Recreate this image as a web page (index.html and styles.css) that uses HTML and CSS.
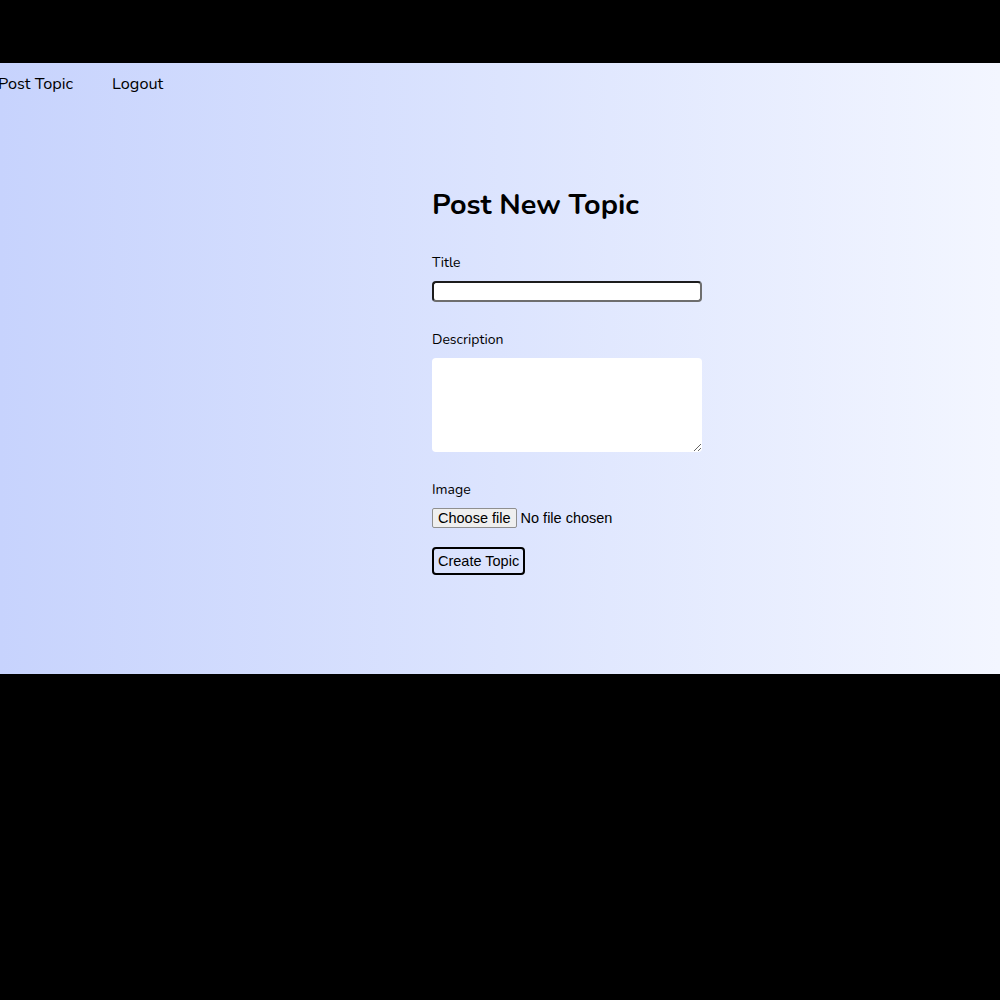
FILE: index.html
```html
<!DOCTYPE html>
<html lang="en">
<head>
<meta charset="utf-8">
<title>Post New Topic</title>
<link rel="stylesheet" href="styles.css">
</head>
<body>
<div class="screen">
  <main class="band">
    <nav class="nav">
      <a class="nav-link" href="#">Post Topic</a>
      <a class="nav-link" href="#">Logout</a>
    </nav>
    <section class="content">
      <form class="topic-form">
        <h1 class="title">Post New Topic</h1>
        <div class="field">
          <label class="label" for="t">Title</label>
          <input class="text-input" id="t" type="text">
        </div>
        <div class="field">
          <label class="label" for="d">Description</label>
          <textarea class="textarea" id="d"></textarea>
        </div>
        <div class="field field-file">
          <label class="label" for="i">Image</label>
          <div class="file-row">
            <span class="file-btn">Choose file</span>
            <span class="file-text">No file chosen</span>
          </div>
        </div>
        <button class="submit" type="button">Create Topic</button>
      </form>
    </section>
  </main>
</div>
</body>
</html>
```
FILE: styles.css
```css
html, body {
  margin: 0;
  padding: 0;
  background: #000;
}
body {
  font-family: "Nunito", "Lato", "Noto Sans", sans-serif;
  color: #000;
}
.screen {
  width: 1000px;
  height: 1000px;
  padding-top: 63px;
  box-sizing: border-box;
}
.band {
  height: 611px;
  background: linear-gradient(to right, #c7d3fd, #dce4fe 50%, #f3f6ff);
  display: flex;
  flex-direction: column;
}
.nav {
  display: flex;
  gap: 39px;
  margin-left: -2px;
  padding-top: 11px;
  height: 29px;
}
.nav-link {
  color: #000;
  text-decoration: none;
  font-size: 16.3px;
  line-height: 20px;
}
.content {
  padding-left: 432px;
  padding-top: 84px;
}
.topic-form {
  width: 270px;
  display: flex;
  flex-direction: column;
}
.title {
  margin: 0 0 31px;
  font-size: 28.75px;
  line-height: 36px;
  font-weight: 700;
}
.field {
  display: flex;
  flex-direction: column;
  margin-bottom: 29px;
}
.label {
  font-size: 14px;
  line-height: 18px;
  margin-bottom: 9px;
}
.text-input {
  box-sizing: border-box;
  width: 270px;
  height: 21px;
  margin: 0;
  border: 2px solid;
  border-color: #1c1c1c #6e6e6e #6e6e6e #1c1c1c;
  border-radius: 4px;
  background: #fff;
}
.textarea {
  box-sizing: border-box;
  width: 270px;
  height: 94px;
  margin: 0;
  border: none;
  border-radius: 4px;
  background: #fff;
}
.field-file {
  margin-bottom: 19px;
}
.file-row {
  display: flex;
  align-items: center;
  font-family: "Liberation Sans", Arial, sans-serif;
  font-size: 14.5px;
}
.file-btn {
  box-sizing: border-box;
  height: 20px;
  line-height: 18px;
  padding: 0 5px;
  border: 1px solid #8f8f8f;
  border-radius: 2px;
  background: #efefef;
  color: #000;
}
.file-text {
  margin-left: 4px;
}
.submit {
  align-self: flex-start;
  box-sizing: border-box;
  height: 28px;
  padding: 0 4px;
  border: 2px solid #000;
  border-radius: 4px;
  background: transparent;
  font-family: "Liberation Sans", Arial, sans-serif;
  font-size: 14.5px;
  color: #000;
}
```
